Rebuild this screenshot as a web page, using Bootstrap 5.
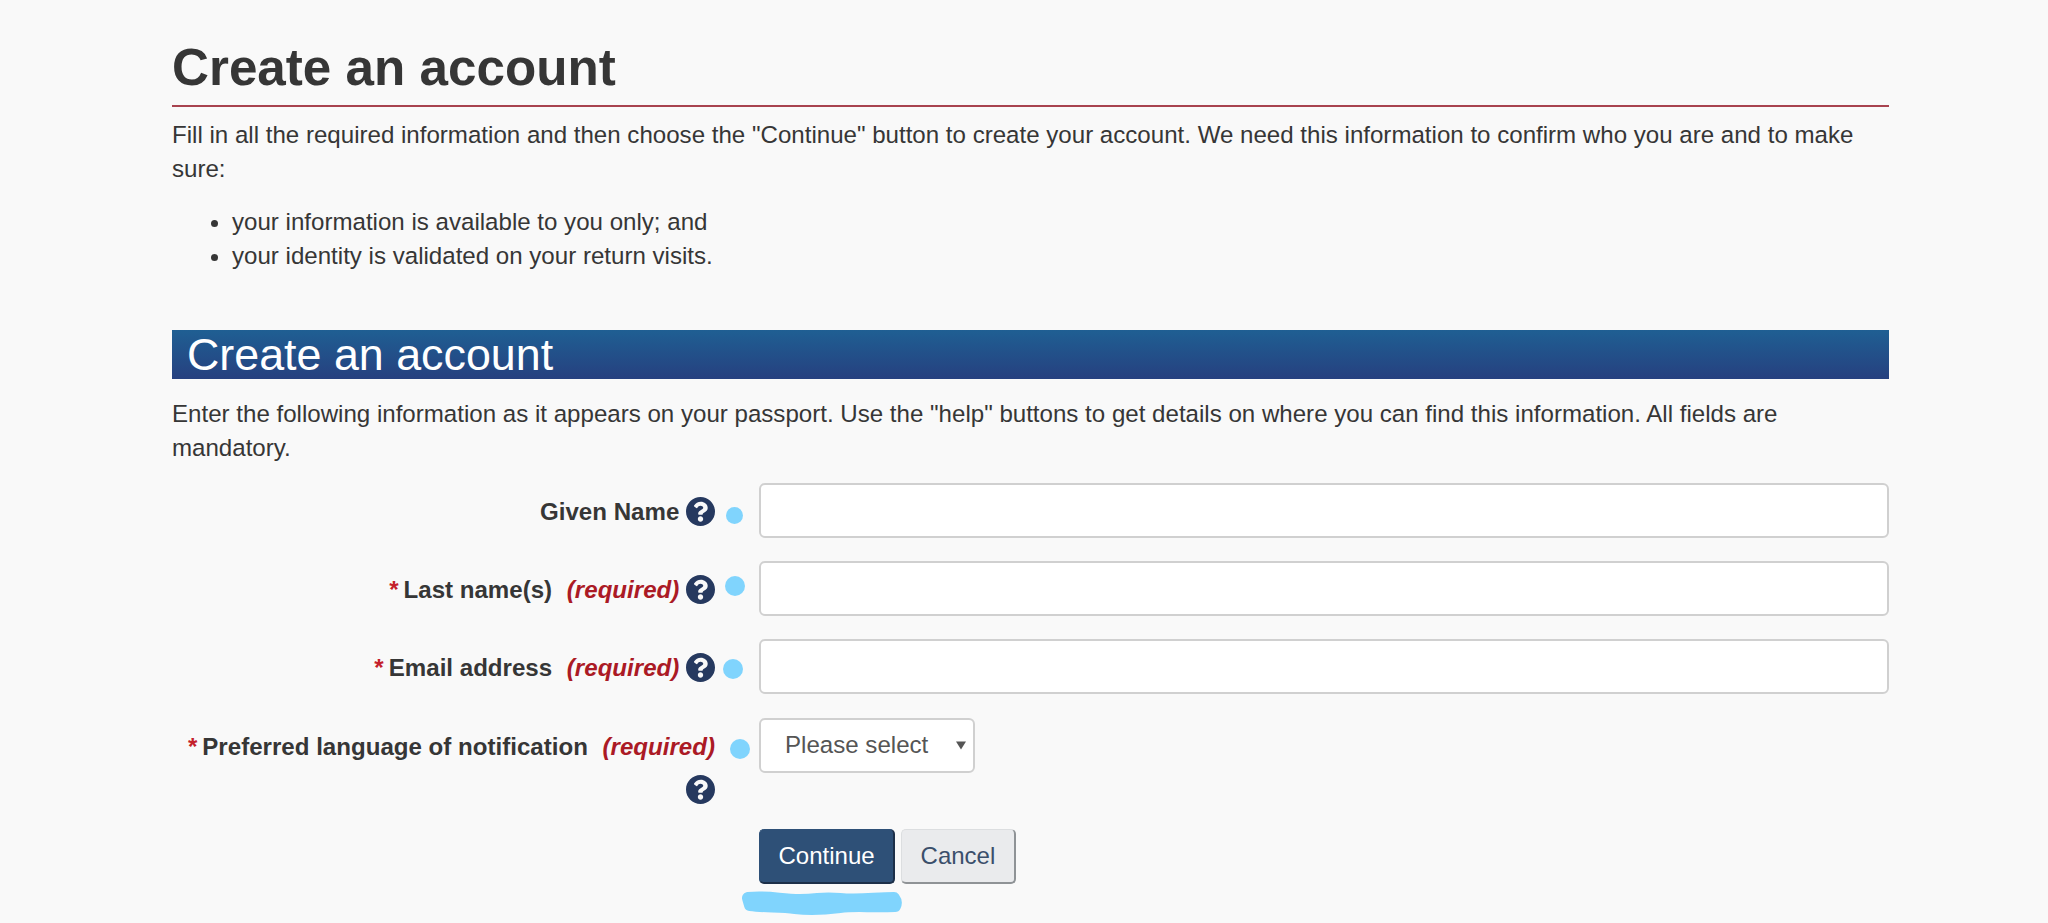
<!DOCTYPE html>
<html lang="en">
<head>
    <meta charset="UTF-8">
    <meta name="viewport" content="width=device-width, initial-scale=1.0">
    <title>Create an account</title>
    <link href="https://cdn.jsdelivr.net/npm/bootstrap@5.3.0/dist/css/bootstrap.min.css" rel="stylesheet">
    <style>
        body {
            background: #f9f9f9;
            color: #363636;
            font-family: "Liberation Sans", Arial, sans-serif;
            font-size: 24.1px;
            line-height: 34px;
        }
        .page-wrap {
            margin-left: 172px;
            width: 1717px;
            padding-top: 38px;
        }
        .page-title {
            font-size: 51.2px;
            font-weight: 700;
            line-height: 60px;
            margin: 0;
            padding-bottom: 7px;
            border-bottom: 2px solid #a8434f;
        }
        .intro { margin: 11px 0 0; }
        .intro-list { margin: 19px 0 0; padding-left: 60px; }
        .form-banner {
            background: linear-gradient(to bottom, #1f5f93, #26407f);
            color: #fff;
            font-size: 44.8px;
            font-weight: 400;
            line-height: 49px;
            height: 49px;
            margin: 57px 0 0;
            padding-left: 15px;
        }
        .form-note { margin: 18px 0 0; }
        .field-row {
            position: relative;
            margin-top: 23px;
            min-height: 55px;
        }
        .field-row.first-row { margin-top: 18px; }
        .field-row.lang-row { margin-top: 24px; }
        .field-label {
            width: 543px;
            flex: none;
            text-align: right;
            font-weight: 700;
            padding-top: 7px;
            line-height: 43px;
        }
        .field-control {
            margin-left: 44px;
            flex: 1;
        }
        .field-input {
            height: 55px;
            border: 2px solid #d0d0d0;
            border-radius: 6px;
            background: #fff;
        }
        .field-select {
            width: 216px;
            height: 55px;
            border: 2px solid #d0d0d0;
            border-radius: 6px;
            font-size: 24.1px;
            color: #555;
            padding: 0 0 0 24px;
            background-color: #fff;
            background-position: right 7px center;
            background-size: 10px 9px;
            background-repeat: no-repeat;
            background-image: url("data:image/svg+xml,%3csvg xmlns='http://www.w3.org/2000/svg' viewBox='0 0 11 9'%3e%3cpath fill='%23555' d='M0 0h11L5.500 9z'/%3e%3c/svg%3e");
        }
        .req-star { color: #c4202b; font-weight: 700; margin-right: 5px; }
        .req-note { color: #ab1a25; font-style: italic; margin-left: 8px; }
        .help-icon {
            width: 29px;
            height: 29px;
            vertical-align: -6px;
            fill: #26395f;
        }
        .annot-dot {
            position: absolute;
            background: #80d4fd;
            border-radius: 50%;
        }
        .form-actions { margin-left: 587px; margin-top: 18px; gap: 6px; }
        .action-btn {
            height: 55px;
            font-size: 24px;
            line-height: 1;
            border-radius: 5px;
            padding: 0 18.5px;
        }
        .action-primary {
            background: #2e5077;
            color: #fff;
            border: 1px solid #2e5077;
            border-bottom: 2px solid #1c2f48;
            border-right: 2px solid #1c2f48;
        }
        .action-cancel {
            background: #eaebed;
            color: #3b4f6b;
            border: 1px solid #dcdee0;
            border-bottom: 2px solid #8f9396;
            border-right: 2px solid #8f9396;
        }
        .annot-scribble { position: absolute; left: 740px; top: 888px; }
    </style>
</head>
<body>
    <svg width="0" height="0" class="d-block position-absolute">
        <symbol id="helpGlyph" viewBox="8 8 496 496">
            <path d="M504 256c0 136.997-111.043 248-248 248S8 392.997 8 256C8 119.083 119.043 8 256 8s248 111.083 248 248zM262.655 90c-54.497 0-89.255 22.957-116.549 63.758-3.536 5.286-2.353 12.415 2.715 16.258l34.699 26.31c5.205 3.947 12.621 3.008 16.665-2.122 17.864-22.658 30.113-35.797 57.303-35.797 20.429 0 45.698 13.148 45.698 32.958 0 14.976-12.363 22.667-32.534 33.976C247.128 238.528 216 254.941 216 296v4c0 6.627 5.373 12 12 12h56c6.627 0 12-5.373 12-12v-1.333c0-28.462 83.186-29.647 83.186-106.667 0-58.002-60.165-102-116.531-102zM256 338c-25.365 0-46 20.635-46 46 0 25.364 20.635 46 46 46s46-20.636 46-46c0-25.365-20.635-46-46-46z"/>
        </symbol>
    </svg>

    <div class="page-wrap">
        <h1 class="page-title">Create an account</h1>
        <p class="intro">Fill in all the required information and then choose the "Continue" button to create your account. We need this information to confirm who you are and to make sure:</p>
        <ul class="intro-list">
            <li>your information is available to you only; and</li>
            <li>your identity is validated on your return visits.</li>
        </ul>

        <h2 class="form-banner">Create an account</h2>
        <p class="form-note">Enter the following information as it appears on your passport. Use the "help" buttons to get details on where you can find this information. All fields are mandatory.</p>

        <form>
            <div class="field-row first-row d-flex">
                <label class="field-label" for="givenName">Given Name <svg class="help-icon"><use href="#helpGlyph"/></svg></label>
                <span class="annot-dot" style="left:554px;top:24px;width:17px;height:17px"></span>
                <div class="field-control"><input class="form-control field-input" id="givenName" type="text"></div>
            </div>
            <div class="field-row d-flex">
                <label class="field-label" for="lastName"><span class="req-star">*</span>Last name(s) <span class="req-note">(required)</span> <svg class="help-icon"><use href="#helpGlyph"/></svg></label>
                <span class="annot-dot" style="left:553px;top:15px;width:20px;height:20px"></span>
                <div class="field-control"><input class="form-control field-input" id="lastName" type="text"></div>
            </div>
            <div class="field-row d-flex">
                <label class="field-label" for="email"><span class="req-star">*</span>Email address <span class="req-note">(required)</span> <svg class="help-icon"><use href="#helpGlyph"/></svg></label>
                <span class="annot-dot" style="left:551px;top:20px;width:20px;height:20px"></span>
                <div class="field-control"><input class="form-control field-input" id="email" type="text"></div>
            </div>
            <div class="field-row lang-row d-flex">
                <label class="field-label" for="language"><span class="req-star">*</span>Preferred language of notification <span class="req-note">(required)</span> <svg class="help-icon"><use href="#helpGlyph"/></svg></label>
                <span class="annot-dot" style="left:558px;top:21px;width:20px;height:20px"></span>
                <div class="field-control">
                    <select class="form-select field-select" id="language">
                        <option>Please select</option>
                    </select>
                </div>
            </div>
            <div class="form-actions d-flex">
                <button type="button" class="btn action-btn action-primary">Continue</button>
                <button type="button" class="btn action-btn action-cancel">Cancel</button>
            </div>
        </form>
    </div>

    <svg class="annot-scribble" width="166" height="28" viewBox="0 0 166 28">
        <path d="M8 10 C30 8 40 12 60 12 S80 9 100 11 S135 10 154 10 Q157 14 155 18 C130 19 115 17 100 19 S70 22 55 20 S25 19 10 17 Z" fill="#80d4fd" stroke="#80d4fd" stroke-width="12" stroke-linejoin="round"/>
    </svg>

    <script src="https://cdn.jsdelivr.net/npm/bootstrap@5.3.0/dist/js/bootstrap.bundle.min.js"></script>
</body>
</html>
